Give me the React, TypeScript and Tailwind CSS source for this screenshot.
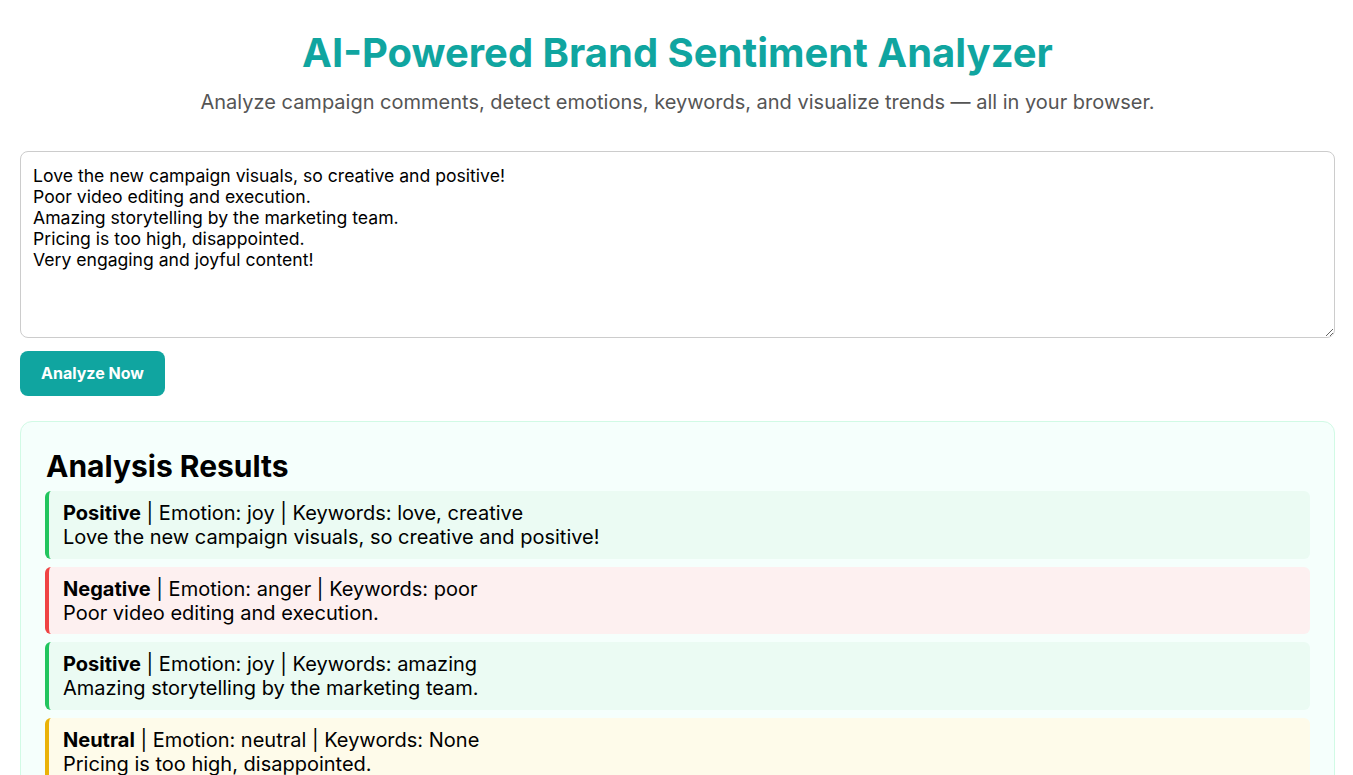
import React, { useState } from 'react';

type Result = {
  sentiment: 'Positive' | 'Negative' | 'Neutral';
  emotion: string;
  keywords: string;
  text: string;
};

const defaultText = `Love the new campaign visuals, so creative and positive!
Poor video editing and execution.
Amazing storytelling by the marketing team.
Pricing is too high, disappointed.
Very engaging and joyful content!`;

const results: Result[] = [
  { sentiment: 'Positive', emotion: 'joy', keywords: 'love, creative', text: 'Love the new campaign visuals, so creative and positive!' },
  { sentiment: 'Negative', emotion: 'anger', keywords: 'poor', text: 'Poor video editing and execution.' },
  { sentiment: 'Positive', emotion: 'joy', keywords: 'amazing', text: 'Amazing storytelling by the marketing team.' },
  { sentiment: 'Neutral', emotion: 'neutral', keywords: 'None', text: 'Pricing is too high, disappointed.' },
  { sentiment: 'Positive', emotion: 'joy', keywords: 'engaging, joyful', text: 'Very engaging and joyful content!' },
];

const itemStyles = {
  Positive: 'bg-[#ebfbf3] border-[#22c55e]',
  Negative: 'bg-[#fdf0f0] border-[#ef4444]',
  Neutral: 'bg-[#fefbea] border-[#eab308]',
};

const App: React.FC = () => {
  const [input, setInput] = useState(defaultText);

  return (
    <div className="min-h-screen bg-white pl-5 pr-[18px] pt-[26px] pb-10 font-['Inter',sans-serif] text-black">
      {/* Header */}
      <h1 className="text-center text-[40px] font-bold leading-[54px] text-[#10a5a0]">
        AI-Powered Brand Sentiment Analyzer
      </h1>
      <p className="mt-[10px] text-center text-[20px] leading-[24px] text-[#555]">
        Analyze campaign comments, detect emotions, keywords, and visualize trends — all in your browser.
      </p>

      {/* Input */}
      <textarea
        value={input}
        onChange={(e) => setInput(e.target.value)}
        className="mt-[37px] block h-[187px] w-full rounded-lg border border-[#ccc] px-3 py-[13px] text-[17.6px] leading-[21px] text-black outline-none"
      />
      <button className="mt-[13px] rounded-lg bg-[#10a5a0] px-[21px] py-3 text-[16px] font-bold leading-[21px] text-white">
        Analyze Now
      </button>

      {/* Results */}
      <div className="mt-[25px] rounded-xl border border-[#d1fae5] bg-[#f5fffc] px-6 pt-[25px] pb-[25px]">
        <h2 className="pl-px text-[30px] font-bold leading-[38px]">Analysis Results</h2>
        <div className="mt-[6px] flex flex-col gap-2">
          {results.map((r, i) => (
            <div
              key={i}
              className={`rounded-md border-l-4 px-[14px] pt-[10px] pb-[9.5px] text-[20px] leading-[24px] ${itemStyles[r.sentiment]}`}
            >
              <div>
                <strong className="font-bold">{r.sentiment}</strong> | Emotion: {r.emotion} | Keywords: {r.keywords}
              </div>
              <div>{r.text}</div>
            </div>
          ))}
        </div>
      </div>
    </div>
  );
};

export default App;
